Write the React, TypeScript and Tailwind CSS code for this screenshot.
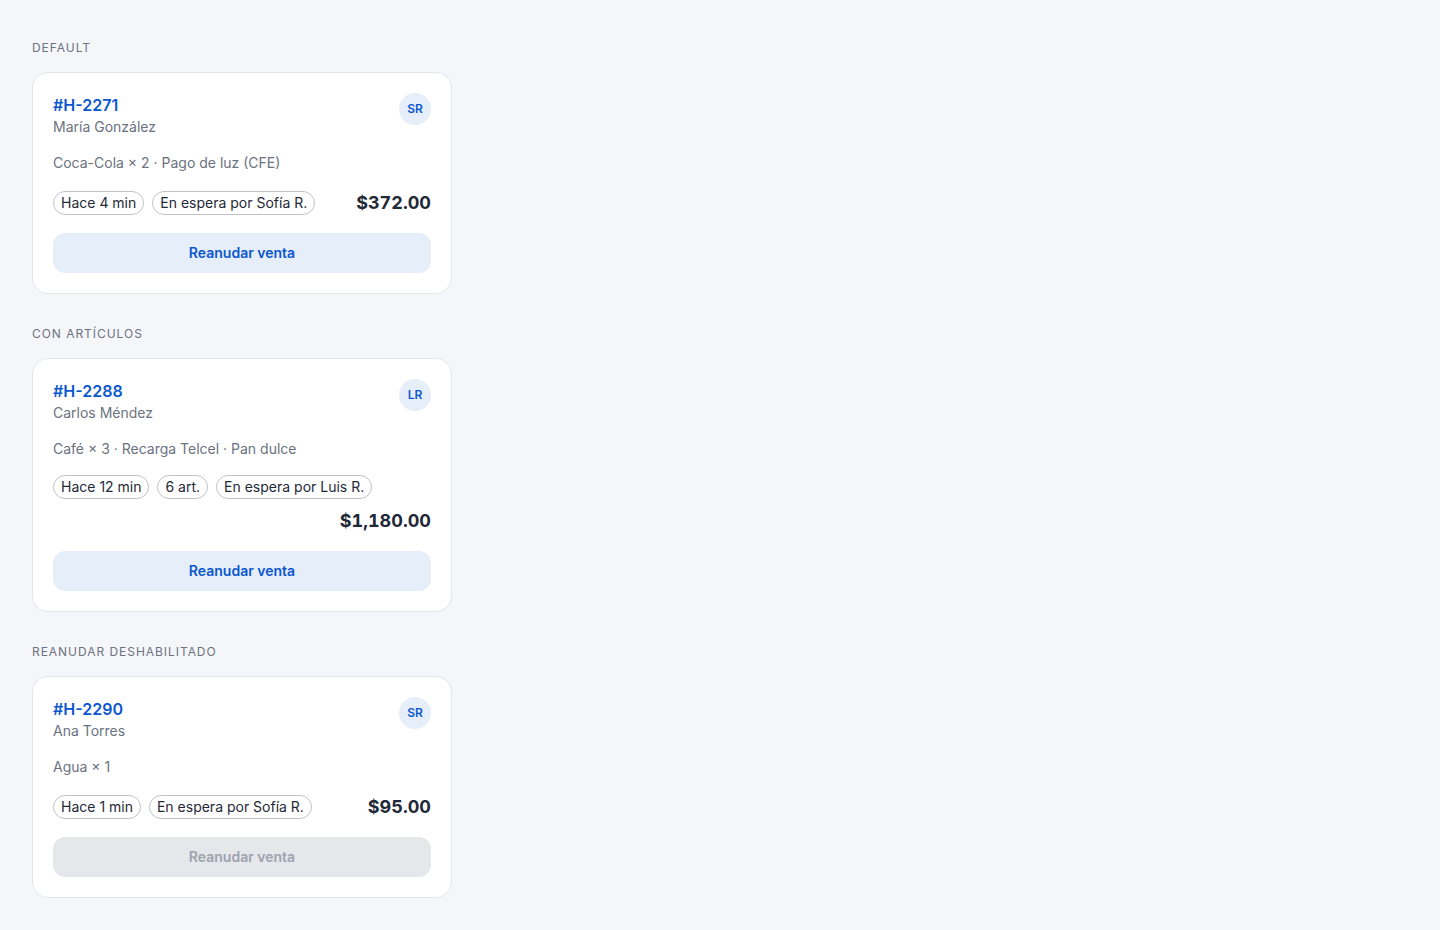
type HeldSale = {
  id: string;
  customer: string;
  items: string;
  minutes: number;
  itemCount?: number;
  cashier: string;
  initials: string;
  total: string;
  disabled?: boolean;
};

const sections: { label: string; sale: HeldSale }[] = [
  {
    label: 'Default',
    sale: {
      id: '#H-2271',
      customer: 'María González',
      items: 'Coca-Cola × 2 · Pago de luz (CFE)',
      minutes: 4,
      cashier: 'Sofía R.',
      initials: 'SR',
      total: '$372.00',
    },
  },
  {
    label: 'Con artículos',
    sale: {
      id: '#H-2288',
      customer: 'Carlos Méndez',
      items: 'Café × 3 · Recarga Telcel · Pan dulce',
      minutes: 12,
      itemCount: 6,
      cashier: 'Luis R.',
      initials: 'LR',
      total: '$1,180.00',
    },
  },
  {
    label: 'Reanudar deshabilitado',
    sale: {
      id: '#H-2290',
      customer: 'Ana Torres',
      items: 'Agua × 1',
      minutes: 1,
      cashier: 'Sofía R.',
      initials: 'SR',
      total: '$95.00',
      disabled: true,
    },
  },
];

function Chip({ children }: { children: React.ReactNode }) {
  return (
    <span className="rounded-full border border-[#bfc3c9] px-[7px] py-px text-sm leading-5 text-[#1f2937]">
      {children}
    </span>
  );
}

function HeldSaleCard({ sale }: { sale: HeldSale }) {
  return (
    <div className="w-[420px] rounded-2xl border border-[#e3e6eb] bg-white p-5">
      <div className="flex items-start justify-between">
        <div>
          <div className="text-base leading-6 font-semibold text-[#0b57d0]">{sale.id}</div>
          <div className="text-sm leading-5 text-[#6b7280]">{sale.customer}</div>
        </div>
        <div className="flex h-8 w-8 items-center justify-center rounded-full bg-[#e6eef9] text-xs font-semibold text-[#0b57d0]">
          {sale.initials}
        </div>
      </div>

      <p className="mt-4 text-sm leading-5 text-[#6b7280]">{sale.items}</p>

      {/* chips wrap first; the total drops to its own line, right-aligned */}
      <div className="mt-4 flex flex-wrap items-center gap-y-2">
        <div className="flex flex-wrap items-center gap-2">
          <Chip>Hace {sale.minutes} min</Chip>
          {sale.itemCount && <Chip>{sale.itemCount} art.</Chip>}
          <Chip>En espera por {sale.cashier}</Chip>
        </div>
        <span className="ml-auto text-lg leading-7 font-bold text-[#1f2937] tabular-nums">{sale.total}</span>
      </div>

      <button
        type="button"
        disabled={sale.disabled}
        className={
          sale.disabled
            ? 'mt-4 h-10 w-full rounded-xl bg-[#e5e7eb] text-sm font-semibold text-[#9ca3af]'
            : 'mt-4 h-10 w-full rounded-xl bg-[#e6eef9] text-sm font-semibold text-[#0b57d0]'
        }
      >
        Reanudar venta
      </button>
    </div>
  );
}

export default function App() {
  return (
    <div
      className="min-h-screen bg-[#f5f6fa] px-8 pt-10 pb-8"
      style={{ fontFamily: 'Inter, "Noto Sans", sans-serif' }}
    >
      <div className="flex flex-col gap-8">
        {sections.map((section) => (
          <section key={section.sale.id}>
            <h2 className="mb-4 text-xs leading-4 font-normal tracking-[0.08em] text-[#6b7280] uppercase">
              {section.label}
            </h2>
            <HeldSaleCard sale={section.sale} />
          </section>
        ))}
      </div>
    </div>
  );
}
